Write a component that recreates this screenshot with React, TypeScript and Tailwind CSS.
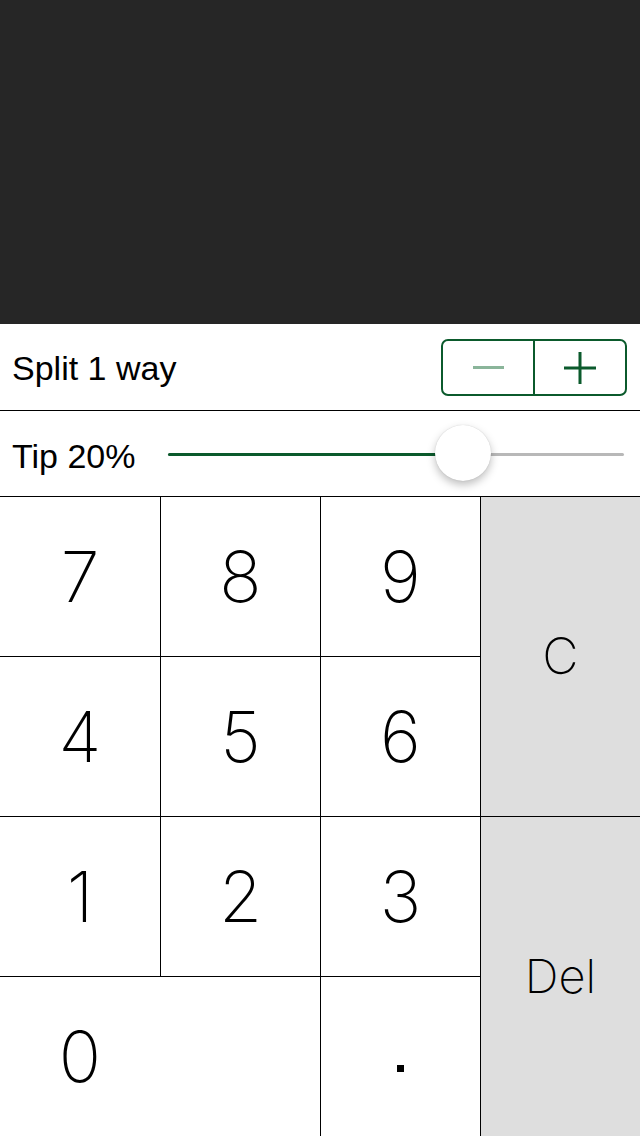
import React from 'react';

const sans = "font-['Liberation_Sans',Arial,sans-serif]";
const thin = "font-['Inter','Lato',sans-serif] font-[150]";

function Key({ label, className = '', labelClass = '' }: { label: string; className?: string; labelClass?: string }) {
  return (
    <div className={`flex items-center justify-center text-black ${className}`}>
      <span className={`${thin} ${labelClass}`}>{label}</span>
    </div>
  );
}

export default function App() {
  const tip = 20;
  const pct = ((463 - 168) / (624 - 168)) * 100;

  return (
    <div className="w-[640px] h-[1136px] flex flex-col bg-white overflow-hidden">
      {/* Display */}
      <div className="h-[324px] bg-[#262626]" />

      {/* Split row */}
      <div className="h-[87px] flex items-center justify-between pl-[12px] pr-[13px] border-b border-black">
        <span className={`${sans} text-[34px] text-black leading-none mt-[2px]`}>Split 1 way</span>
        <div className="flex w-[186px] h-[57px] border-2 border-[#0b5a2c] rounded-[7px] mt-[1px]">
          <button className="flex-1 flex items-center justify-center border-r-2 border-[#0b5a2c]">
            <span className="block w-[31px] h-[3px] bg-[#8ab59a]" />
          </button>
          <button className="flex-1 flex items-center justify-center">
            <svg width="32" height="32" viewBox="0 0 32 32">
              <path d="M16 0v32M0 16h32" stroke="#0b5a2c" strokeWidth="3" />
            </svg>
          </button>
        </div>
      </div>

      {/* Tip row */}
      <div className="h-[86px] flex items-center pl-[12px] pr-[16px] border-b border-black">
        <span className={`${sans} text-[34px] text-black leading-none w-[156px] mt-[4px]`}>Tip {tip}%</span>
        <div className="relative flex-1 h-[3px] bg-[#b8b8b8] rounded-full mt-[2px]">
          <div className="h-full bg-[#0b5a2c] rounded-full" style={{ width: `${pct}%` }} />
          <div
            className="absolute top-1/2 w-[56px] h-[56px] -ml-[28px] -mt-[30px] rounded-full bg-white shadow-[0_4px_8px_rgba(0,0,0,0.25),0_0_1px_rgba(0,0,0,0.2)]"
            style={{ left: `${pct}%` }}
          />
        </div>
      </div>

      {/* Keypad */}
      <div className="flex-1 grid grid-cols-[160px_159px_159px_159px] grid-rows-[159px_159px_159px_159px] gap-px bg-black">
        <Key label="7" className="bg-white" labelClass="text-[70px]" />
        <Key label="8" className="bg-white" labelClass="text-[70px]" />
        <Key label="9" className="bg-white" labelClass="text-[70px]" />
        <Key label="C" className="bg-[#dedede] row-span-2" labelClass="text-[50px]" />
        <Key label="4" className="bg-white" labelClass="text-[70px]" />
        <Key label="5" className="bg-white" labelClass="text-[70px]" />
        <Key label="6" className="bg-white" labelClass="text-[70px]" />
        <Key label="1" className="bg-white" labelClass="text-[70px]" />
        <Key label="2" className="bg-white" labelClass="text-[70px]" />
        <Key label="3" className="bg-white" labelClass="text-[70px]" />
        <Key label="Del" className="bg-[#dedede] row-span-2" labelClass="text-[47px]" />
        <div className="col-span-2 bg-white flex items-center">
          <div className="w-[160px] flex justify-center">
            <span className={`${thin} text-[70px] text-black`}>0</span>
          </div>
        </div>
        <div className="bg-white flex items-center justify-center">
          <span className="block w-[7px] h-[7px] bg-black mt-[24px]" />
        </div>
      </div>
    </div>
  );
}
